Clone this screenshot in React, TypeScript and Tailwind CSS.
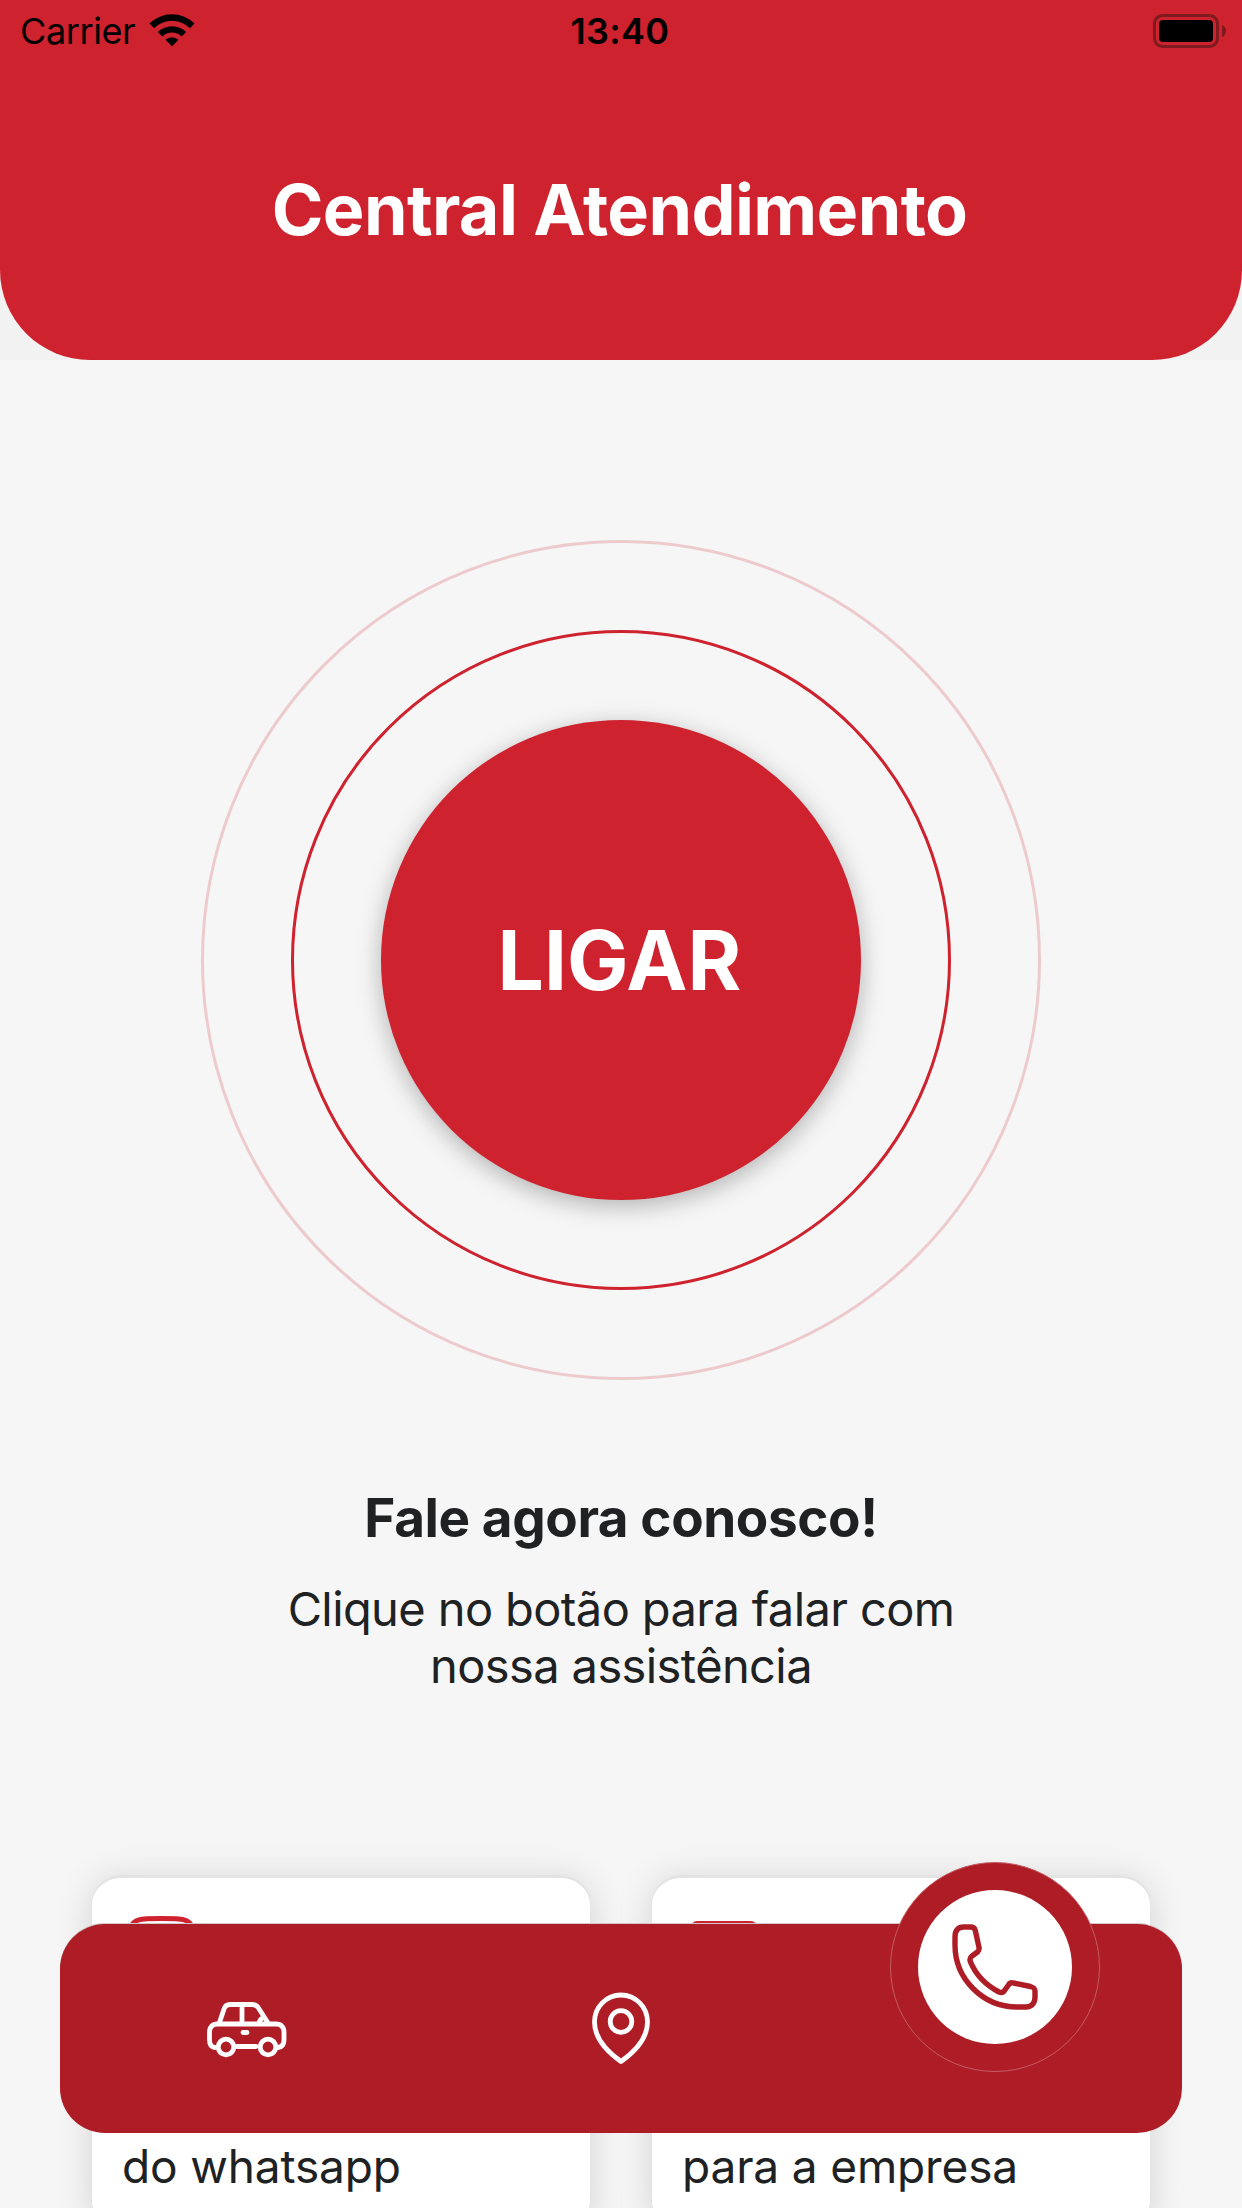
import React from 'react';

const actions = [
  { id: 'whatsapp', label: 'do whatsapp' },
  { id: 'company', label: 'para a empresa' },
];

const StatusBar: React.FC = () => (
  <div className="grid h-[60px] grid-cols-3 items-center pr-4 pl-5 text-black">
    <div className="flex items-center gap-[14px]">
      <span className="pt-px text-[36px] leading-[60px] tracking-[-0.4px]">Carrier</span>
      <svg width="46" height="34" viewBox="0 0 46 34" className="-mt-0.5">
        <path d="M0.5 10.5a32 32 0 0 1 45 0l-4.6 4.7a25.4 25.4 0 0 0-35.8 0z" />
        <path d="M8.8 19a20.2 20.2 0 0 1 28.4 0l-4.6 4.5a13.7 13.7 0 0 0-19.2 0z" />
        <path d="M16.5 26.8a9.3 9.3 0 0 1 13 0L23 33.3z" />
      </svg>
    </div>
    <div className="-ml-[6px] pt-px text-center text-[36px] leading-[60px] font-semibold tracking-[0.3px]">13:40</div>
    <svg width="73" height="34" viewBox="0 0 73 34" className="justify-self-end">
      <rect x="1.5" y="1.5" width="63" height="31" rx="8" fill="none" stroke="#7e1a20" strokeWidth="3" />
      <rect x="6" y="6" width="54" height="22" rx="4" />
      <path d="M69 11v12c2.8-1 4-3.5 4-6s-1.2-5-4-6z" fill="#7e1a20" />
    </svg>
  </div>
);

const App: React.FC = () => {
  return (
    <div className="relative flex h-[2208px] w-[1242px] flex-col overflow-hidden bg-[#f6f6f6] font-['Inter',sans-serif] text-[#202122]">
      <header className="shrink-0 bg-[#f2f2f2]">
        <div className="h-[360px] rounded-b-[90px] bg-[#ce222e]">
          <StatusBar />
          <h1 className="pt-[100px] pr-[3px] text-center text-[70px] leading-[100px] font-bold tracking-[-0.6px] text-white">
            Central Atendimento
          </h1>
        </div>
      </header>

      {/* Call button with its rings */}
      <div className="mt-[180px] flex size-[840px] shrink-0 items-center justify-center self-center rounded-full border-[3px] border-[#ce222e]/20">
        <div className="flex size-[660px] items-center justify-center rounded-full border-[3px] border-[#ce222e]">
          <button className="size-[480px] rounded-full bg-[#ce222e] pr-[3px] pt-px text-[82px] font-bold tracking-[0.1px] text-white shadow-[0_6px_24px_rgba(0,0,0,0.28)]">
            LIGAR
          </button>
        </div>
      </div>

      <div className="mt-[102px] shrink-0 text-center">
        <h2 className="text-[53px] leading-[72px] font-bold tracking-[-0.4px]">Fale agora conosco!</h2>
        <p className="mt-[26px] text-[47px] leading-[57px] tracking-[-0.6px]">
          Clique no botão para falar com
          <br />
          nossa assistência
        </p>
      </div>

      <div className="mt-[181px] flex shrink-0 gap-[60px] px-[91px]">
        {actions.map((action) => (
          <div
            key={action.id}
            className="flex h-[355px] flex-1 flex-col rounded-[30px] border border-t-[3px] border-[#e4e4e4] bg-white pt-[36px] pl-[30px] shadow-[0_4px_36px_rgba(0,0,0,0.14)]"
          >
            {action.id === 'whatsapp' ? (
              <svg width="84" height="84" viewBox="0 0 84 84" fill="none" stroke="#ce222e" strokeWidth="5">
                <path d="M8 14C12 5 17 4.5 39.5 4.5S67 5 71 14v58H8z" />
              </svg>
            ) : (
              <svg width="84" height="84" viewBox="0 0 84 84" fill="none" stroke="#ce222e" strokeWidth="5">
                <rect x="10.5" y="9.5" width="63" height="62" rx="5" />
              </svg>
            )}
            <p className="mt-[140px] text-[46px] leading-[56px] tracking-[-0.15px]">{action.label}</p>
          </div>
        ))}
      </div>

      {/* Floating tab bar */}
      <nav className="absolute top-[1924px] left-[60px] grid h-[209px] w-[1122px] grid-cols-3 items-center justify-items-center rounded-[45px] bg-[#ae1d26] shadow-[0_-1px_0_#d0c8c8]">
        <svg width="82" height="58" viewBox="0 0 82 58" fill="none" stroke="white" strokeWidth="4.8" strokeLinecap="round" strokeLinejoin="round" className="mt-[3px]">
          <path d="M9 46.5C4.500 46 3.5 43 3.5 39V31c0-5 3-8 8-8H70c5 0 8 3 8 8v8c0 4-2 7-6 7.5" />
          <path d="M13.500 21.500 18 8c1-3 3-4.500 6-4.500H46c3 0 5 1 6.500 3.500L62 22M36 4.500V22M53.500 20.500l1.500-2.500M37 31.500h4M31 45.500H50" />
          <circle cx="20" cy="46" r="7.8" />
          <circle cx="62" cy="46" r="7.8" />
        </svg>
        <svg width="60" height="74" viewBox="0 0 60 74" fill="none" stroke="white" strokeWidth="4.8" strokeLinejoin="round">
          <path d="M30 69.5C18 61 3.5 47 3.5 30a26.5 27 0 0 1 53 0C56.5 47 42 61 30 69.5z" />
          <circle cx="30" cy="29.5" r="10.8" />
        </svg>
        <div className="-mt-[124px] flex size-[210px] items-center justify-center rounded-full border border-[#c45b62] bg-[#ae1d26]">
          <div className="flex size-[154px] items-center justify-center rounded-full bg-white">
            <svg width="86" height="86" viewBox="0 0 86 86" fill="none" stroke="#ae1d26" strokeWidth="5.4" strokeLinejoin="round">
              <path d="M11.5 3H18.5C21.5 3 22.8 4 23.3 6.5L27 23.5C27.5 25.5 27 26.5 25.5 28L20 32C18 33.5 17.5 35.5 18.5 38C24 51 34.5 61.5 47 68C49.5 69 51.2 68.5 52.5 66.5L56.5 61C57.5 59 59 58.3 61.5 59L78.5 62.5C82 63.5 83 64.5 83 67.5V73C83 79.5 79.5 83 74 83H65C31 83 3 55 3 21V13C3 6 6.5 3 11.5 3z" />
            </svg>
          </div>
        </div>
      </nav>
    </div>
  );
};

export default App;
